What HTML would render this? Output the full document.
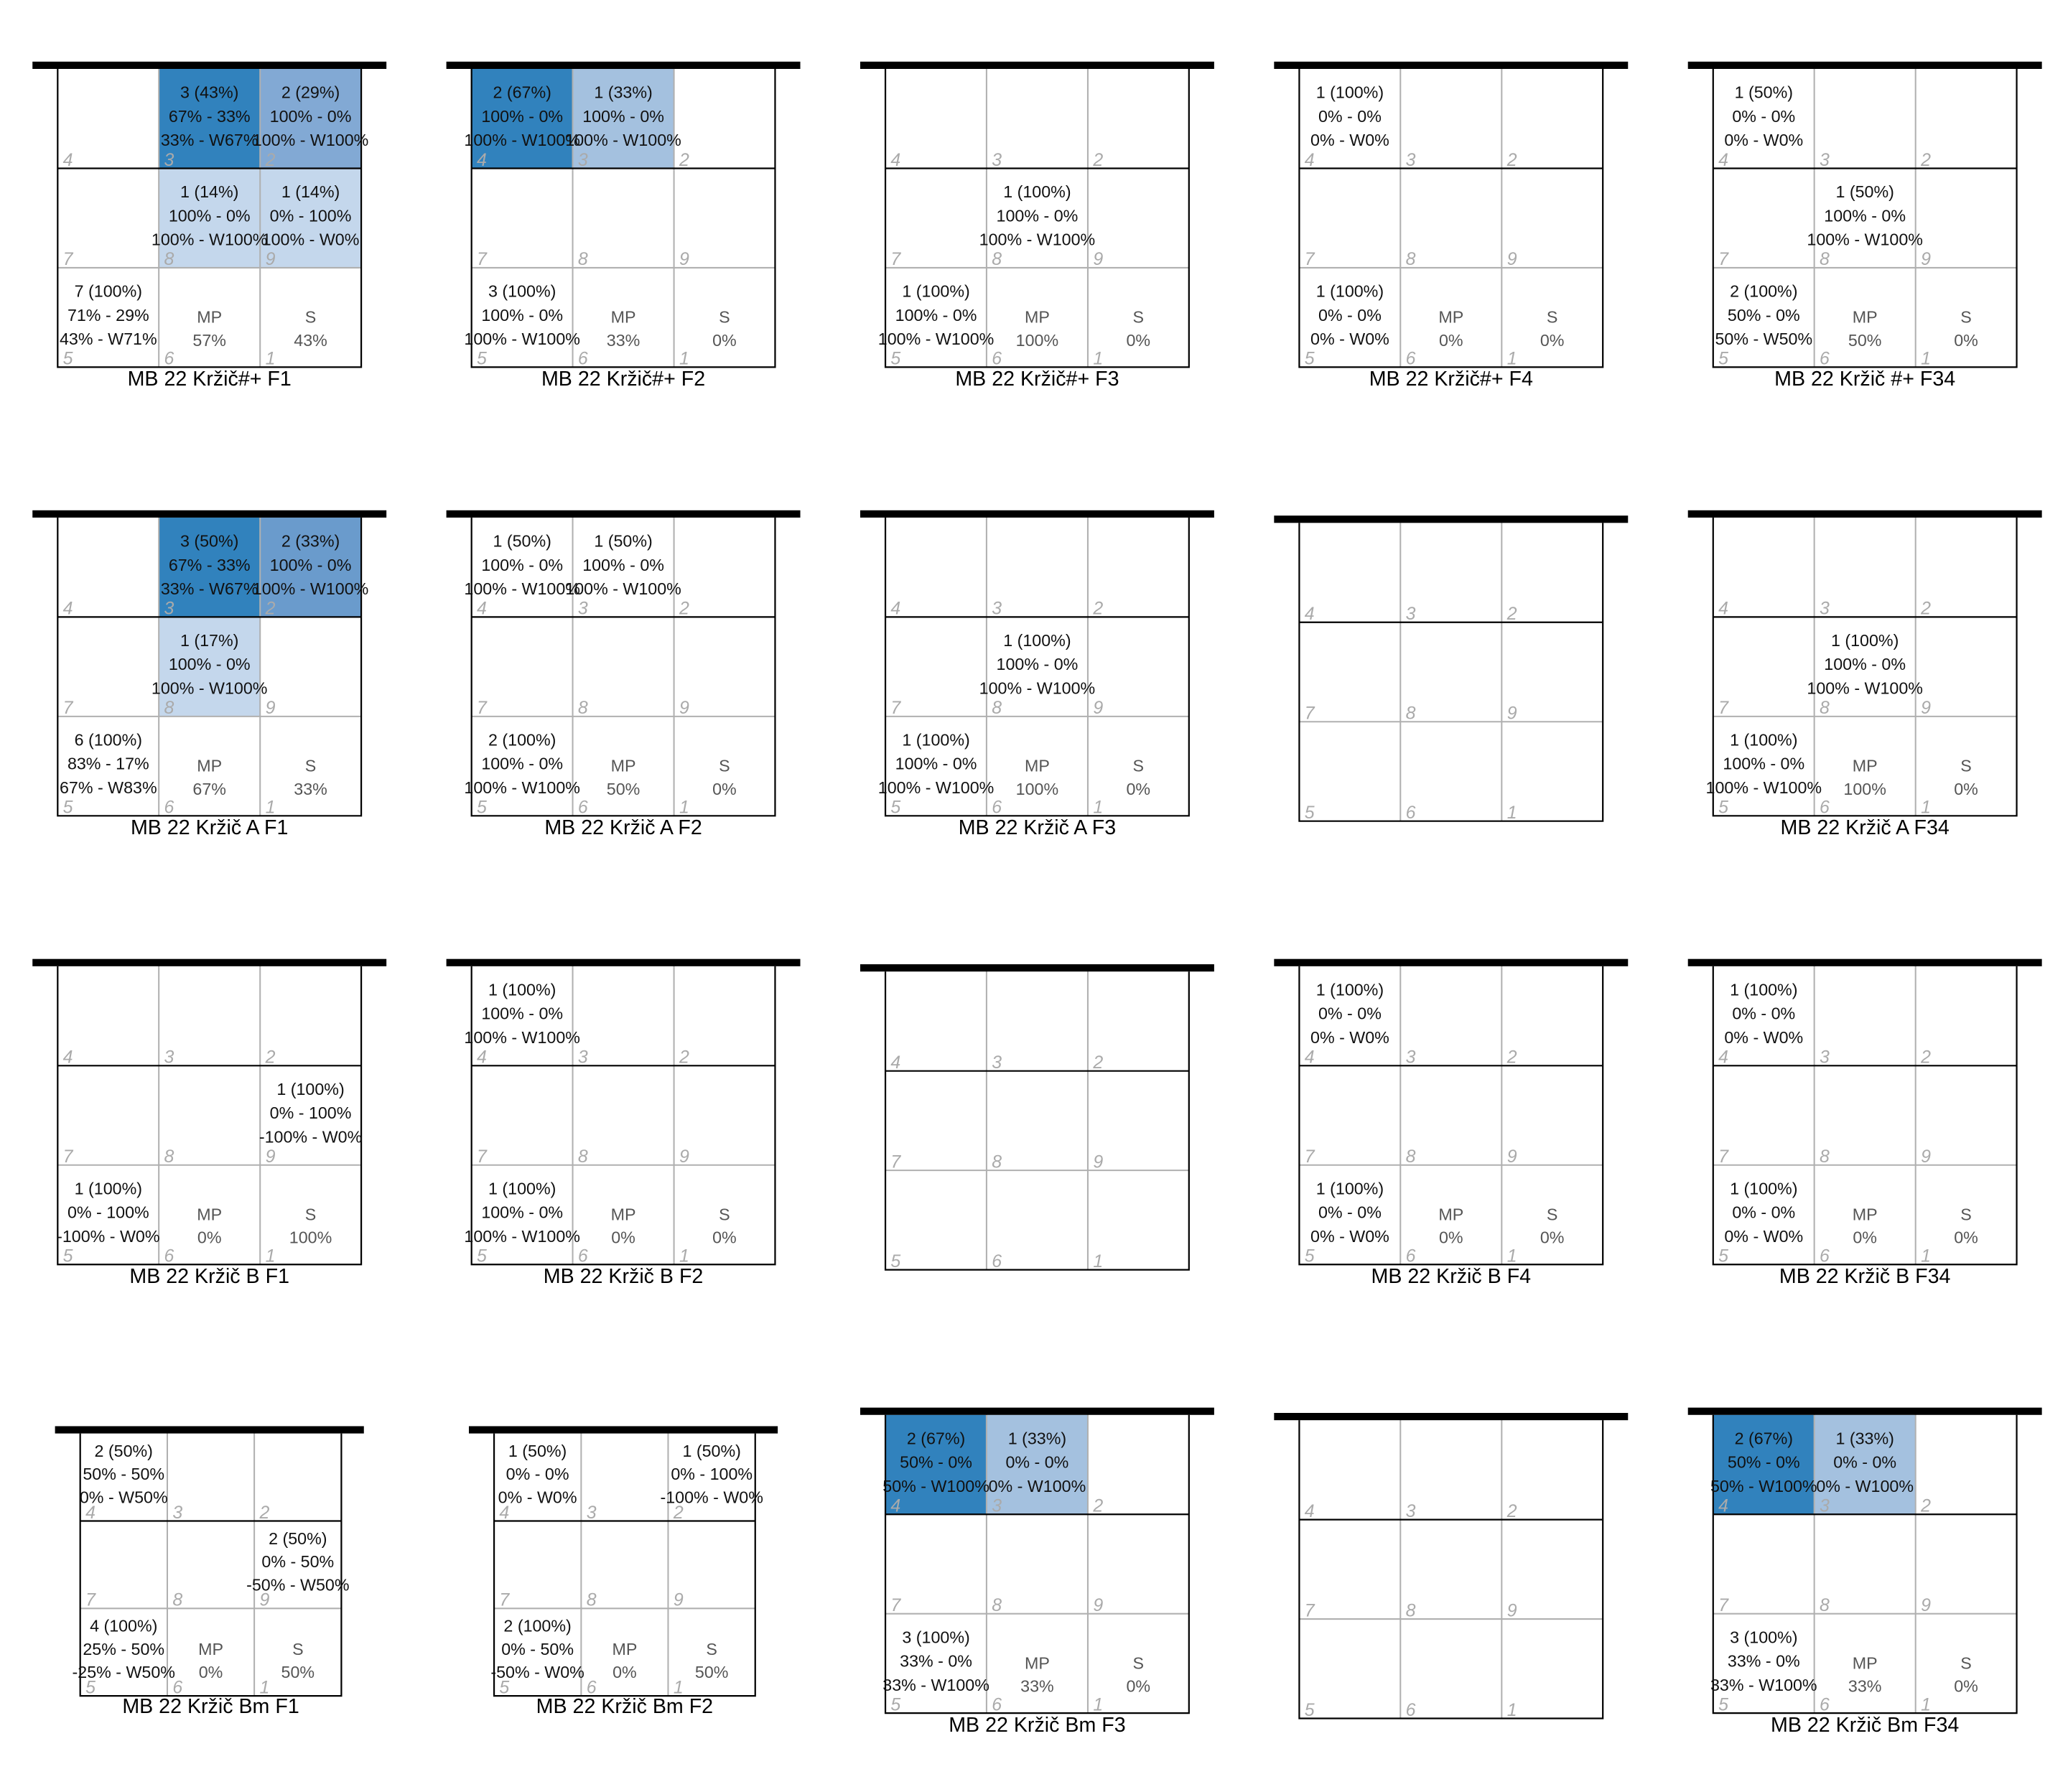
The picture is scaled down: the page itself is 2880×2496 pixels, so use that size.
<!DOCTYPE html>
<html><head><meta charset="utf-8"><style>
html,body{margin:0;padding:0;background:#fff}
svg{display:block}
text{font-family:"Liberation Sans",sans-serif}
.t{font-size:12.6px;fill:#111;text-anchor:middle}
.g{font-size:12.6px;fill:#555;text-anchor:middle}
.n{font-size:13.5px;fill:#aaa;font-style:italic}
.h{font-size:15.5px;fill:#000;text-anchor:middle}
.gl{stroke:#b0b0b0;stroke-width:1.1}
.bl{stroke:#000;stroke-width:1.2;fill:none}
</style></head><body>
<svg width="2880" height="2496" viewBox="0 0 1560 1352" xmlns="http://www.w3.org/2000/svg">
<defs>
<g id="grid">
<line class="gl" x1="76.3" y1="-3" x2="76.3" y2="225"/>
<line class="gl" x1="152.7" y1="-3" x2="152.7" y2="225"/>
<line class="gl" x1="0" y1="150" x2="229" y2="150"/>
<line class="bl" x1="0" y1="75" x2="229" y2="75"/>
<rect x="-19" y="-5.5" width="267" height="5.5" fill="#000"/>
<path class="bl" d="M0 0V225H229V0"/>
<text class="n" x="4" y="73">4</text><text class="n" x="80.3" y="73">3</text><text class="n" x="156.7" y="73">2</text>
<text class="n" x="4" y="148">7</text><text class="n" x="80.3" y="148">8</text><text class="n" x="156.7" y="148">9</text>
<text class="n" x="4" y="223">5</text><text class="n" x="80.3" y="223">6</text><text class="n" x="156.7" y="223">1</text>
</g>
<g id="sgrid">
<line class="gl" x1="65.7" y1="-3" x2="65.7" y2="198"/>
<line class="gl" x1="131.3" y1="-3" x2="131.3" y2="198"/>
<line class="gl" x1="0" y1="132" x2="197" y2="132"/>
<line class="bl" x1="0" y1="66" x2="197" y2="66"/>
<rect x="-19" y="-5.5" width="233" height="5.5" fill="#000"/>
<path class="bl" d="M0 0V198H197V0"/>
<text class="n" x="4" y="64">4</text><text class="n" x="69.7" y="64">3</text><text class="n" x="135.3" y="64">2</text>
<text class="n" x="4" y="130">7</text><text class="n" x="69.7" y="130">8</text><text class="n" x="135.3" y="130">9</text>
<text class="n" x="4" y="196">5</text><text class="n" x="69.7" y="196">6</text><text class="n" x="135.3" y="196">1</text>
</g>
</defs>

<!-- ROW 1 -->
<g transform="translate(43.5,52)">
<rect x="76.3" y="0" width="76.4" height="75" fill="#3182bd"/>
<rect x="152.7" y="0" width="76.3" height="75" fill="#82a9d4"/>
<rect x="76.3" y="75" width="152.7" height="75" fill="#c4d7ec"/>
<use href="#grid"/>
<text class="t" y="22"><tspan x="114.5">3 (43%)</tspan><tspan x="114.5" dy="18">67% - 33%</tspan><tspan x="114.5" dy="18">33% - W67%</tspan></text>
<text class="t" y="22"><tspan x="190.8">2 (29%)</tspan><tspan x="190.8" dy="18">100% - 0%</tspan><tspan x="190.8" dy="18">100% - W100%</tspan></text>
<text class="t" y="97"><tspan x="114.5">1 (14%)</tspan><tspan x="114.5" dy="18">100% - 0%</tspan><tspan x="114.5" dy="18">100% - W100%</tspan></text>
<text class="t" y="97"><tspan x="190.8">1 (14%)</tspan><tspan x="190.8" dy="18">0% - 100%</tspan><tspan x="190.8" dy="18">100% - W0%</tspan></text>
<text class="t" y="172"><tspan x="38.2">7 (100%)</tspan><tspan x="38.2" dy="18">71% - 29%</tspan><tspan x="38.2" dy="18">43% - W71%</tspan></text>
<text class="g" y="191.5"><tspan x="114.5">MP</tspan><tspan x="114.5" dy="17.5">57%</tspan></text>
<text class="g" y="191.5"><tspan x="190.8">S</tspan><tspan x="190.8" dy="17.5">43%</tspan></text>
<text class="h" x="114.5" y="239">MB 22 Kržič#+ F1</text>
</g>

<g transform="translate(355.7,52)">
<rect x="0" y="0" width="76.3" height="75" fill="#3182bd"/>
<rect x="76.3" y="0" width="76.4" height="75" fill="#a4c1df"/>
<use href="#grid"/>
<text class="t" y="22"><tspan x="38.2">2 (67%)</tspan><tspan x="38.2" dy="18">100% - 0%</tspan><tspan x="38.2" dy="18">100% - W100%</tspan></text>
<text class="t" y="22"><tspan x="114.5">1 (33%)</tspan><tspan x="114.5" dy="18">100% - 0%</tspan><tspan x="114.5" dy="18">100% - W100%</tspan></text>
<text class="t" y="172"><tspan x="38.2">3 (100%)</tspan><tspan x="38.2" dy="18">100% - 0%</tspan><tspan x="38.2" dy="18">100% - W100%</tspan></text>
<text class="g" y="191.5"><tspan x="114.5">MP</tspan><tspan x="114.5" dy="17.5">33%</tspan></text>
<text class="g" y="191.5"><tspan x="190.8">S</tspan><tspan x="190.8" dy="17.5">0%</tspan></text>
<text class="h" x="114.5" y="239">MB 22 Kržič#+ F2</text>
</g>

<g transform="translate(667.9,52)">
<use href="#grid"/>
<text class="t" y="97"><tspan x="114.5">1 (100%)</tspan><tspan x="114.5" dy="18">100% - 0%</tspan><tspan x="114.5" dy="18">100% - W100%</tspan></text>
<text class="t" y="172"><tspan x="38.2">1 (100%)</tspan><tspan x="38.2" dy="18">100% - 0%</tspan><tspan x="38.2" dy="18">100% - W100%</tspan></text>
<text class="g" y="191.5"><tspan x="114.5">MP</tspan><tspan x="114.5" dy="17.5">100%</tspan></text>
<text class="g" y="191.5"><tspan x="190.8">S</tspan><tspan x="190.8" dy="17.5">0%</tspan></text>
<text class="h" x="114.5" y="239">MB 22 Kržič#+ F3</text>
</g>

<g transform="translate(980.1,52)">
<use href="#grid"/>
<text class="t" y="22"><tspan x="38.2">1 (100%)</tspan><tspan x="38.2" dy="18">0% - 0%</tspan><tspan x="38.2" dy="18">0% - W0%</tspan></text>
<text class="t" y="172"><tspan x="38.2">1 (100%)</tspan><tspan x="38.2" dy="18">0% - 0%</tspan><tspan x="38.2" dy="18">0% - W0%</tspan></text>
<text class="g" y="191.5"><tspan x="114.5">MP</tspan><tspan x="114.5" dy="17.5">0%</tspan></text>
<text class="g" y="191.5"><tspan x="190.8">S</tspan><tspan x="190.8" dy="17.5">0%</tspan></text>
<text class="h" x="114.5" y="239">MB 22 Kržič#+ F4</text>
</g>

<g transform="translate(1292.3,52)">
<use href="#grid"/>
<text class="t" y="22"><tspan x="38.2">1 (50%)</tspan><tspan x="38.2" dy="18">0% - 0%</tspan><tspan x="38.2" dy="18">0% - W0%</tspan></text>
<text class="t" y="97"><tspan x="114.5">1 (50%)</tspan><tspan x="114.5" dy="18">100% - 0%</tspan><tspan x="114.5" dy="18">100% - W100%</tspan></text>
<text class="t" y="172"><tspan x="38.2">2 (100%)</tspan><tspan x="38.2" dy="18">50% - 0%</tspan><tspan x="38.2" dy="18">50% - W50%</tspan></text>
<text class="g" y="191.5"><tspan x="114.5">MP</tspan><tspan x="114.5" dy="17.5">50%</tspan></text>
<text class="g" y="191.5"><tspan x="190.8">S</tspan><tspan x="190.8" dy="17.5">0%</tspan></text>
<text class="h" x="114.5" y="239">MB 22 Kržič #+ F34</text>
</g>

<!-- ROW 2 -->
<g transform="translate(43.5,390.5)">
<rect x="76.3" y="0" width="76.4" height="75" fill="#3182bd"/>
<rect x="152.7" y="0" width="76.3" height="75" fill="#6a9bcc"/>
<rect x="76.3" y="75" width="76.4" height="75" fill="#c4d7ec"/>
<use href="#grid"/>
<text class="t" y="22"><tspan x="114.5">3 (50%)</tspan><tspan x="114.5" dy="18">67% - 33%</tspan><tspan x="114.5" dy="18">33% - W67%</tspan></text>
<text class="t" y="22"><tspan x="190.8">2 (33%)</tspan><tspan x="190.8" dy="18">100% - 0%</tspan><tspan x="190.8" dy="18">100% - W100%</tspan></text>
<text class="t" y="97"><tspan x="114.5">1 (17%)</tspan><tspan x="114.5" dy="18">100% - 0%</tspan><tspan x="114.5" dy="18">100% - W100%</tspan></text>
<text class="t" y="172"><tspan x="38.2">6 (100%)</tspan><tspan x="38.2" dy="18">83% - 17%</tspan><tspan x="38.2" dy="18">67% - W83%</tspan></text>
<text class="g" y="191.5"><tspan x="114.5">MP</tspan><tspan x="114.5" dy="17.5">67%</tspan></text>
<text class="g" y="191.5"><tspan x="190.8">S</tspan><tspan x="190.8" dy="17.5">33%</tspan></text>
<text class="h" x="114.5" y="239">MB 22 Kržič A F1</text>
</g>

<g transform="translate(355.7,390.5)">
<use href="#grid"/>
<text class="t" y="22"><tspan x="38.2">1 (50%)</tspan><tspan x="38.2" dy="18">100% - 0%</tspan><tspan x="38.2" dy="18">100% - W100%</tspan></text>
<text class="t" y="22"><tspan x="114.5">1 (50%)</tspan><tspan x="114.5" dy="18">100% - 0%</tspan><tspan x="114.5" dy="18">100% - W100%</tspan></text>
<text class="t" y="172"><tspan x="38.2">2 (100%)</tspan><tspan x="38.2" dy="18">100% - 0%</tspan><tspan x="38.2" dy="18">100% - W100%</tspan></text>
<text class="g" y="191.5"><tspan x="114.5">MP</tspan><tspan x="114.5" dy="17.5">50%</tspan></text>
<text class="g" y="191.5"><tspan x="190.8">S</tspan><tspan x="190.8" dy="17.5">0%</tspan></text>
<text class="h" x="114.5" y="239">MB 22 Kržič A F2</text>
</g>

<g transform="translate(667.9,390.5)">
<use href="#grid"/>
<text class="t" y="97"><tspan x="114.5">1 (100%)</tspan><tspan x="114.5" dy="18">100% - 0%</tspan><tspan x="114.5" dy="18">100% - W100%</tspan></text>
<text class="t" y="172"><tspan x="38.2">1 (100%)</tspan><tspan x="38.2" dy="18">100% - 0%</tspan><tspan x="38.2" dy="18">100% - W100%</tspan></text>
<text class="g" y="191.5"><tspan x="114.5">MP</tspan><tspan x="114.5" dy="17.5">100%</tspan></text>
<text class="g" y="191.5"><tspan x="190.8">S</tspan><tspan x="190.8" dy="17.5">0%</tspan></text>
<text class="h" x="114.5" y="239">MB 22 Kržič A F3</text>
</g>

<g transform="translate(980.1,394.5)"><use href="#grid"/></g>

<g transform="translate(1292.3,390.5)">
<use href="#grid"/>
<text class="t" y="97"><tspan x="114.5">1 (100%)</tspan><tspan x="114.5" dy="18">100% - 0%</tspan><tspan x="114.5" dy="18">100% - W100%</tspan></text>
<text class="t" y="172"><tspan x="38.2">1 (100%)</tspan><tspan x="38.2" dy="18">100% - 0%</tspan><tspan x="38.2" dy="18">100% - W100%</tspan></text>
<text class="g" y="191.5"><tspan x="114.5">MP</tspan><tspan x="114.5" dy="17.5">100%</tspan></text>
<text class="g" y="191.5"><tspan x="190.8">S</tspan><tspan x="190.8" dy="17.5">0%</tspan></text>
<text class="h" x="114.5" y="239">MB 22 Kržič A F34</text>
</g>

<!-- ROW 3 -->
<g transform="translate(43.5,729)">
<use href="#grid"/>
<text class="t" y="97"><tspan x="190.8">1 (100%)</tspan><tspan x="190.8" dy="18">0% - 100%</tspan><tspan x="190.8" dy="18">-100% - W0%</tspan></text>
<text class="t" y="172"><tspan x="38.2">1 (100%)</tspan><tspan x="38.2" dy="18">0% - 100%</tspan><tspan x="38.2" dy="18">-100% - W0%</tspan></text>
<text class="g" y="191.5"><tspan x="114.5">MP</tspan><tspan x="114.5" dy="17.5">0%</tspan></text>
<text class="g" y="191.5"><tspan x="190.8">S</tspan><tspan x="190.8" dy="17.5">100%</tspan></text>
<text class="h" x="114.5" y="239">MB 22 Kržič B F1</text>
</g>

<g transform="translate(355.7,729)">
<use href="#grid"/>
<text class="t" y="22"><tspan x="38.2">1 (100%)</tspan><tspan x="38.2" dy="18">100% - 0%</tspan><tspan x="38.2" dy="18">100% - W100%</tspan></text>
<text class="t" y="172"><tspan x="38.2">1 (100%)</tspan><tspan x="38.2" dy="18">100% - 0%</tspan><tspan x="38.2" dy="18">100% - W100%</tspan></text>
<text class="g" y="191.5"><tspan x="114.5">MP</tspan><tspan x="114.5" dy="17.5">0%</tspan></text>
<text class="g" y="191.5"><tspan x="190.8">S</tspan><tspan x="190.8" dy="17.5">0%</tspan></text>
<text class="h" x="114.5" y="239">MB 22 Kržič B F2</text>
</g>

<g transform="translate(667.9,733)"><use href="#grid"/></g>

<g transform="translate(980.1,729)">
<use href="#grid"/>
<text class="t" y="22"><tspan x="38.2">1 (100%)</tspan><tspan x="38.2" dy="18">0% - 0%</tspan><tspan x="38.2" dy="18">0% - W0%</tspan></text>
<text class="t" y="172"><tspan x="38.2">1 (100%)</tspan><tspan x="38.2" dy="18">0% - 0%</tspan><tspan x="38.2" dy="18">0% - W0%</tspan></text>
<text class="g" y="191.5"><tspan x="114.5">MP</tspan><tspan x="114.5" dy="17.5">0%</tspan></text>
<text class="g" y="191.5"><tspan x="190.8">S</tspan><tspan x="190.8" dy="17.5">0%</tspan></text>
<text class="h" x="114.5" y="239">MB 22 Kržič B F4</text>
</g>

<g transform="translate(1292.3,729)">
<use href="#grid"/>
<text class="t" y="22"><tspan x="38.2">1 (100%)</tspan><tspan x="38.2" dy="18">0% - 0%</tspan><tspan x="38.2" dy="18">0% - W0%</tspan></text>
<text class="t" y="172"><tspan x="38.2">1 (100%)</tspan><tspan x="38.2" dy="18">0% - 0%</tspan><tspan x="38.2" dy="18">0% - W0%</tspan></text>
<text class="g" y="191.5"><tspan x="114.5">MP</tspan><tspan x="114.5" dy="17.5">0%</tspan></text>
<text class="g" y="191.5"><tspan x="190.8">S</tspan><tspan x="190.8" dy="17.5">0%</tspan></text>
<text class="h" x="114.5" y="239">MB 22 Kržič B F34</text>
</g>

<!-- ROW 4 -->
<g transform="translate(60.5,1081.5)">
<use href="#sgrid"/>
<text class="t" y="17.5"><tspan x="32.8">2 (50%)</tspan><tspan x="32.8" dy="17.5">50% - 50%</tspan><tspan x="32.8" dy="17.5">0% - W50%</tspan></text>
<text class="t" y="83.5"><tspan x="164.2">2 (50%)</tspan><tspan x="164.2" dy="17.5">0% - 50%</tspan><tspan x="164.2" dy="17.5">-50% - W50%</tspan></text>
<text class="t" y="149.5"><tspan x="32.8">4 (100%)</tspan><tspan x="32.8" dy="17.5">25% - 50%</tspan><tspan x="32.8" dy="17.5">-25% - W50%</tspan></text>
<text class="g" y="167"><tspan x="98.5">MP</tspan><tspan x="98.5" dy="17.5">0%</tspan></text>
<text class="g" y="167"><tspan x="164.2">S</tspan><tspan x="164.2" dy="17.5">50%</tspan></text>
<text class="h" x="98.5" y="211">MB 22 Kržič Bm F1</text>
</g>

<g transform="translate(372.7,1081.5)">
<use href="#sgrid"/>
<text class="t" y="17.5"><tspan x="32.8">1 (50%)</tspan><tspan x="32.8" dy="17.5">0% - 0%</tspan><tspan x="32.8" dy="17.5">0% - W0%</tspan></text>
<text class="t" y="17.5"><tspan x="164.2">1 (50%)</tspan><tspan x="164.2" dy="17.5">0% - 100%</tspan><tspan x="164.2" dy="17.5">-100% - W0%</tspan></text>
<text class="t" y="149.5"><tspan x="32.8">2 (100%)</tspan><tspan x="32.8" dy="17.5">0% - 50%</tspan><tspan x="32.8" dy="17.5">-50% - W0%</tspan></text>
<text class="g" y="167"><tspan x="98.5">MP</tspan><tspan x="98.5" dy="17.5">0%</tspan></text>
<text class="g" y="167"><tspan x="164.2">S</tspan><tspan x="164.2" dy="17.5">50%</tspan></text>
<text class="h" x="98.5" y="211">MB 22 Kržič Bm F2</text>
</g>

<g transform="translate(667.9,1067.5)">
<rect x="0" y="0" width="76.3" height="75" fill="#3182bd"/>
<rect x="76.3" y="0" width="76.4" height="75" fill="#a4c1df"/>
<use href="#grid"/>
<text class="t" y="22"><tspan x="38.2">2 (67%)</tspan><tspan x="38.2" dy="18">50% - 0%</tspan><tspan x="38.2" dy="18">50% - W100%</tspan></text>
<text class="t" y="22"><tspan x="114.5">1 (33%)</tspan><tspan x="114.5" dy="18">0% - 0%</tspan><tspan x="114.5" dy="18">0% - W100%</tspan></text>
<text class="t" y="172"><tspan x="38.2">3 (100%)</tspan><tspan x="38.2" dy="18">33% - 0%</tspan><tspan x="38.2" dy="18">33% - W100%</tspan></text>
<text class="g" y="191.5"><tspan x="114.5">MP</tspan><tspan x="114.5" dy="17.5">33%</tspan></text>
<text class="g" y="191.5"><tspan x="190.8">S</tspan><tspan x="190.8" dy="17.5">0%</tspan></text>
<text class="h" x="114.5" y="239">MB 22 Kržič Bm F3</text>
</g>

<g transform="translate(980.1,1071.5)"><use href="#grid"/></g>

<g transform="translate(1292.3,1067.5)">
<rect x="0" y="0" width="76.3" height="75" fill="#3182bd"/>
<rect x="76.3" y="0" width="76.4" height="75" fill="#a4c1df"/>
<use href="#grid"/>
<text class="t" y="22"><tspan x="38.2">2 (67%)</tspan><tspan x="38.2" dy="18">50% - 0%</tspan><tspan x="38.2" dy="18">50% - W100%</tspan></text>
<text class="t" y="22"><tspan x="114.5">1 (33%)</tspan><tspan x="114.5" dy="18">0% - 0%</tspan><tspan x="114.5" dy="18">0% - W100%</tspan></text>
<text class="t" y="172"><tspan x="38.2">3 (100%)</tspan><tspan x="38.2" dy="18">33% - 0%</tspan><tspan x="38.2" dy="18">33% - W100%</tspan></text>
<text class="g" y="191.5"><tspan x="114.5">MP</tspan><tspan x="114.5" dy="17.5">33%</tspan></text>
<text class="g" y="191.5"><tspan x="190.8">S</tspan><tspan x="190.8" dy="17.5">0%</tspan></text>
<text class="h" x="114.5" y="239">MB 22 Kržič Bm F34</text>
</g>
</svg>
</body></html>
